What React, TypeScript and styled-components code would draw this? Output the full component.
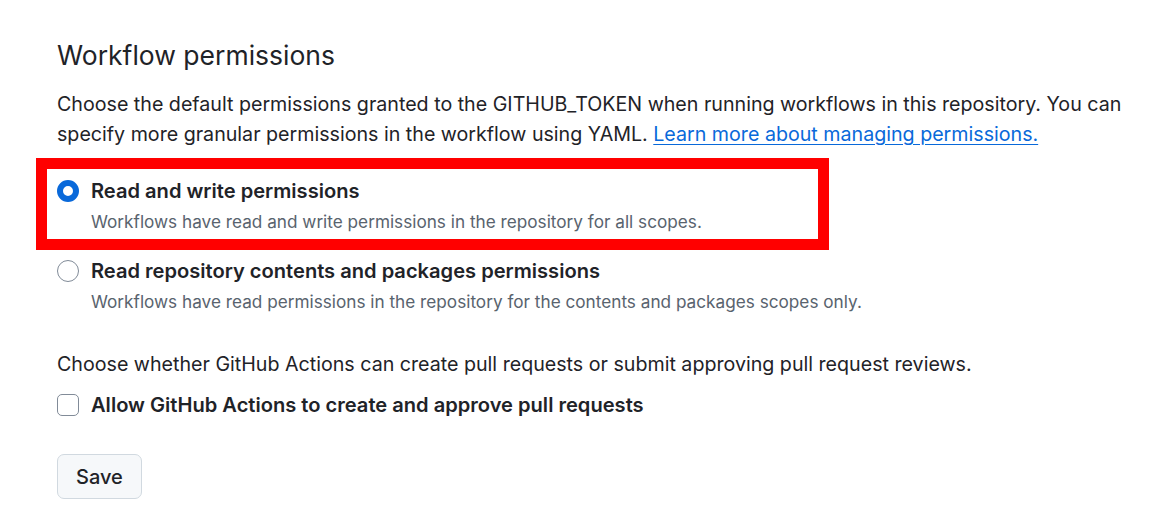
import styled, { createGlobalStyle } from "styled-components";

const GlobalStyle = createGlobalStyle`
    body {
        margin: 0;
        background: #ffffff;
        font-family: Inter, "Noto Sans", "Liberation Sans", sans-serif;
        color: #1f2328;
    }
`;

const Page = styled.div`
    padding: 38px 0 0 57px;
    width: 1168px;
    height: 532px;
    box-sizing: border-box;
`;

const Heading = styled.h2`
    margin: 0;
    font-size: 26.5px;
    line-height: 34px;
    font-weight: 400;
`;

const Text = styled.p<{ $gap?: number }>`
    margin: ${(p) => p.$gap ?? 0}px 0 0;
    max-width: 1095px;
    font-size: 19.65px;
    line-height: 30px;
`;

const Link = styled.a`
    color: #0969da;
    text-decoration: underline;
    text-underline-offset: 3px;
`;

const Highlight = styled.div`
    margin: 9px 0 0 -21px;
    width: 793px;
    box-sizing: border-box;
    border: 11px solid #ff0000;
    padding: 10px 10px 5px;
`;

const Option = styled.label<{ $gap?: number }>`
    display: flex;
    align-items: flex-start;
    gap: 12px;
    margin-top: ${(p) => p.$gap ?? 0}px;
`;

const Radio = styled.span<{ $checked?: boolean }>`
    flex: none;
    width: 22px;
    height: 22px;
    border-radius: 50%;
    box-sizing: border-box;
    border: ${(p) => (p.$checked ? "6px solid #0969da" : "1.5px solid #818b98")};
    background: #ffffff;
    margin-top: 1px;
`;

const Box = styled.span`
    flex: none;
    width: 22px;
    height: 22px;
    border-radius: 5px;
    box-sizing: border-box;
    border: 1.5px solid #818b98;
    background: #ffffff;
    margin-top: 1px;
`;

const OptionBody = styled.div`
    display: flex;
    flex-direction: column;
`;

const OptionTitle = styled.span`
    font-size: 20.1px;
    line-height: 24px;
    font-weight: 600;
`;

const OptionNote = styled.span`
    margin-top: 7px;
    font-size: 17.2px;
    line-height: 24px;
    color: #59636e;
`;

const SaveButton = styled.button`
    margin-top: 37px;
    height: 45px;
    padding: 0 18px;
    font-family: inherit;
    font-size: 20px;
    font-weight: 500;
    color: #1f2328;
    background: #f6f8fa;
    border: 1px solid #d1d9e0;
    border-radius: 7px;
`;

export default function App(): JSX.Element {
    return (
        <Page>
            <GlobalStyle />
            <Heading>Workflow permissions</Heading>
            <Text $gap={17}>
                Choose the default permissions granted to the GITHUB_TOKEN when running workflows in this repository. You can
                specify more granular permissions in the workflow using YAML.{" "}
                <Link href="#">Learn more about managing permissions.</Link>
            </Text>
            <Highlight>
                <Option>
                    <Radio $checked />
                    <OptionBody>
                        <OptionTitle>Read and write permissions</OptionTitle>
                        <OptionNote>Workflows have read and write permissions in the repository for all scopes.</OptionNote>
                    </OptionBody>
                </Option>
            </Highlight>
            <Option $gap={9}>
                <Radio />
                <OptionBody>
                    <OptionTitle>Read repository contents and packages permissions</OptionTitle>
                    <OptionNote>
                        Workflows have read permissions in the repository for the contents and packages scopes only.
                    </OptionNote>
                </OptionBody>
            </Option>
            <Text $gap={35}>
                Choose whether GitHub Actions can create pull requests or submit approving pull request reviews.
            </Text>
            <Option $gap={14}>
                <Box />
                <OptionBody>
                    <OptionTitle>Allow GitHub Actions to create and approve pull requests</OptionTitle>
                </OptionBody>
            </Option>
            <SaveButton>Save</SaveButton>
        </Page>
    );
}
